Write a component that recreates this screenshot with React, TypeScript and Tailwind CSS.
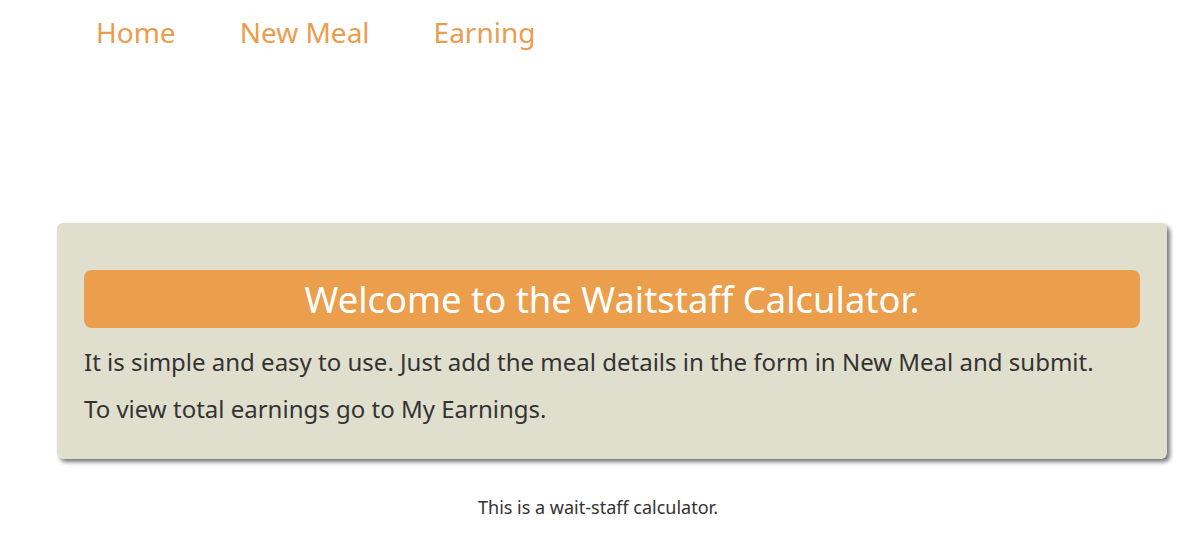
import React from "react";

export default function App() {
  return (
    <div className="min-h-[540px] bg-white" style={{ fontFamily: '"Noto Sans", "Open Sans", sans-serif' }}>
      <nav className="flex pl-[96px] pt-[12px] gap-[64px] text-[28px] leading-[40px] text-[#ec9c4e]">
        <a>Home</a>
        <a>New Meal</a>
        <a>Earning</a>
      </nav>
      <div className="mt-[171px] ml-[57px] mr-[35px] rounded-[6px] bg-[#e0dfcd] shadow-[3px_3px_4px_#777] px-[27px] pt-[47px] pb-[34px]">
        <h1 className="rounded-[8px] bg-[#eb9e4b] text-white text-center text-[36.4px] leading-[58px]">
          Welcome to the Waitstaff Calculator.
        </h1>
        <p className="mt-[18px] text-[24px] leading-[32px] text-[#333]">
          It is simple and easy to use. Just add the meal details in the form in New Meal and submit.
        </p>
        <p className="mt-[15px] text-[24px] leading-[32px] text-[#333]">To view total earnings go to My Earnings.</p>
      </div>
      <footer className="mt-[35px] pr-[6px] text-center text-[18px] leading-[26px] text-[#333]">This is a wait-staff calculator.</footer>
    </div>
  );
}
